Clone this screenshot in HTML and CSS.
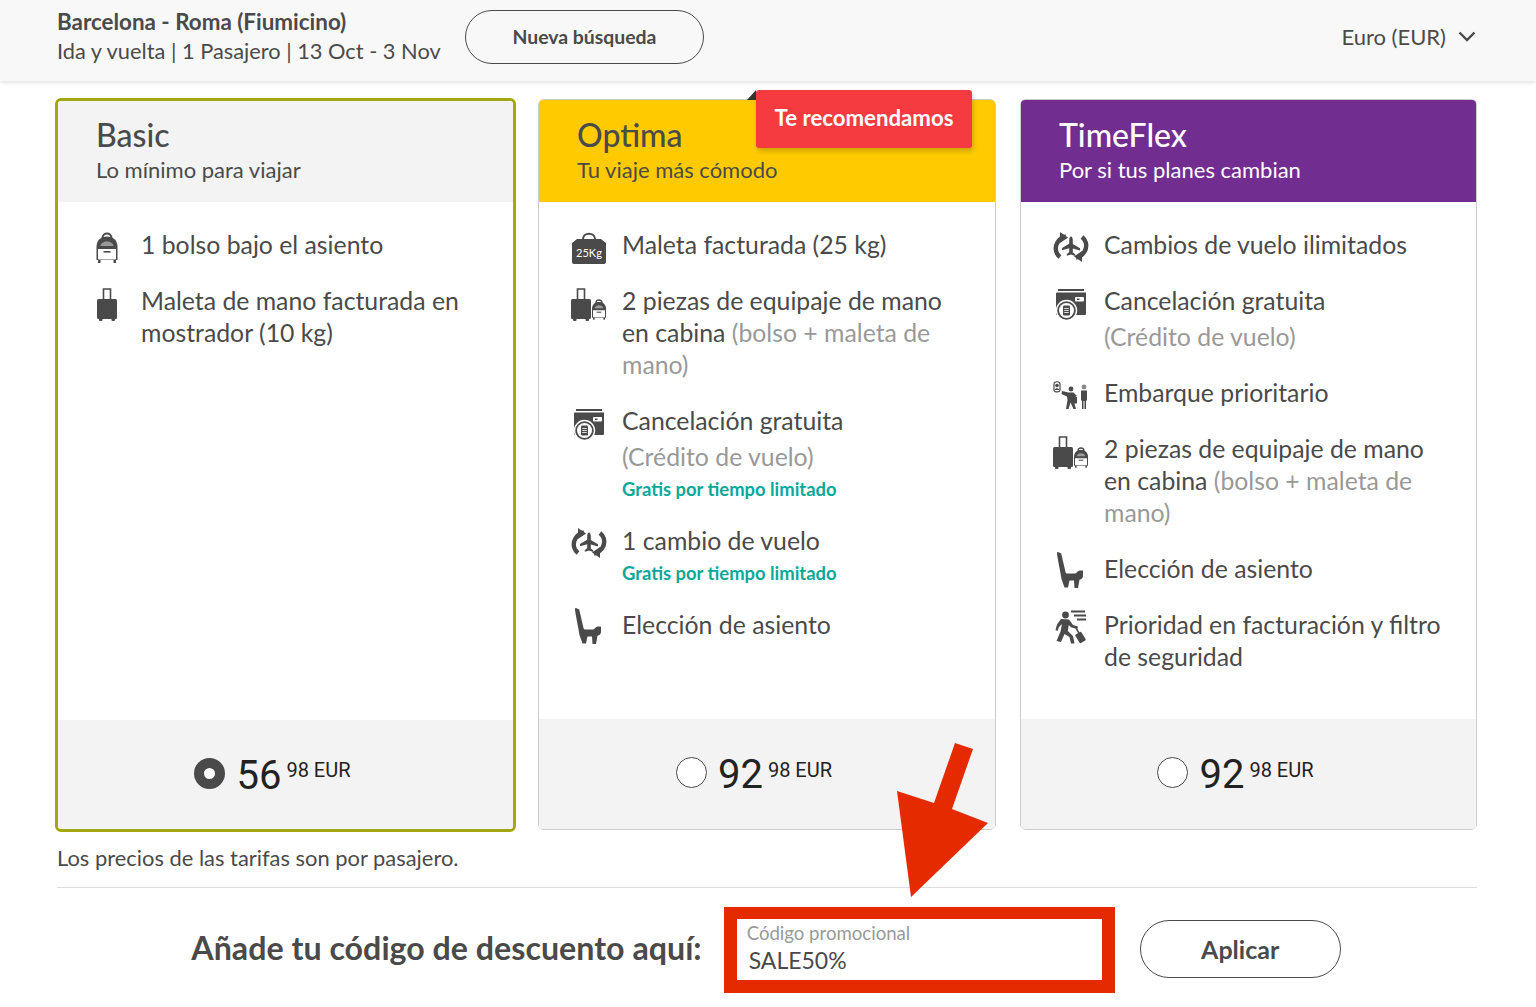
FILE: index.html
```html
<!DOCTYPE html>
<html lang="es">
<head>
    <meta charset="UTF-8">
    <meta name="viewport" content="width=device-width, initial-scale=1.0">
    <title>Tarifas</title>
    <link rel="stylesheet" href="styles.css">
</head>
<body>
    <!-- icon set -->
    <svg class="icon-defs" aria-hidden="true">
        <symbol id="i-backpack" viewBox="0 0 24 32">
            <path d="M7.500 7C7.500 1 16.500 1 16.500 7" fill="none" stroke="#4a4a4a" stroke-width="2"/>
            <path d="M1.500 29V16C1.500 9 6 5.500 12 5.500S22.500 9 22.500 16v13z" fill="#4a4a4a"/>
            <path d="M5.500 15c.5-6 12.500-6 13 0z" fill="#9a9a9a"/>
            <path d="M3 18h18v9.500a1 1 0 0 1-1 1H4a1 1 0 0 1-1-1z" fill="#fff"/>
            <rect x="8.500" y="20" width="7" height="1.600" fill="#4a4a4a"/>
            <rect x="3" y="29" width="2.500" height="3" fill="#4a4a4a"/>
            <rect x="18.500" y="29" width="2.500" height="3" fill="#4a4a4a"/>
        </symbol>
        <symbol id="i-trolley" viewBox="0 0 20 34">
            <path d="M6.500 12V2h7v10" fill="none" stroke="#4a4a4a" stroke-width="1.600"/>
            <rect y="12" width="20" height="20" rx="1.500" fill="#4a4a4a"/>
            <rect x="2" y="31" width="3.500" height="3" rx="1" fill="#4a4a4a"/>
            <rect x="14.500" y="31" width="3.500" height="3" rx="1" fill="#4a4a4a"/>
        </symbol>
        <symbol id="i-bags" viewBox="0 0 36 34">
            <use href="#i-trolley" x="0" y="0" width="20" height="34"/>
            <use href="#i-backpack" x="20" y="11" width="16" height="22"/>
        </symbol>
        <symbol id="i-wallet" viewBox="0 0 32 33">
            <path d="M3 1h26v2H3z" fill="#4a4a4a"/>
            <path d="M2 4.500h29V26a1 1 0 0 1-1 1H2a1 1 0 0 1-1-1V5.500a1 1 0 0 1 1-1z" fill="#4a4a4a"/>
            <rect x="20" y="9" width="9" height="4.500" rx="1" fill="#fff"/>
            <rect x="22" y="10.500" width="2.500" height="1.500" fill="#4a4a4a"/>
            <circle cx="11.500" cy="22.500" r="10" fill="#4a4a4a" stroke="#fff" stroke-width="1.400"/>
            <circle cx="11.500" cy="22.500" r="7.500" fill="#fff"/>
            <rect x="8" y="17.500" width="7" height="10" rx="1.200" fill="#4a4a4a"/>
            <path d="M9.200 20.500h4.600M9.200 22.500h4.600M9.200 24.500h4.600" stroke="#fff" stroke-width=".8"/>
        </symbol>
        <symbol id="i-swap" viewBox="0 0 36 30">
            <path d="M13 4.500C5.500 6 1.500 13 3.200 19.500c.6 2.200 1.800 4 3.800 5.500" fill="none" stroke="#4a4a4a" stroke-width="4.400"/>
            <path d="M23 25.500c7.500-1.500 11.500-8.500 9.800-15-.6-2.200-1.800-4-3.800-5.500" fill="none" stroke="#4a4a4a" stroke-width="4.400"/>
            <path d="M7 0l8 5.500L7 11z" fill="#4a4a4a"/>
            <path d="M29 30l-8-5.500L29 19z" fill="#4a4a4a"/>
            <path d="M18 4.500c1.200 0 1.800 1.800 1.800 4v3.500l7.200 4.200v2.300l-7.200-2v4l2.400 1.800v1.700L18 22.500l-4.200 1.300v-1.700l2.400-1.800v-4l-7.200 2v-2.300l7.200-4.200V8.500c0-2.200.6-4 1.800-4z" fill="#4a4a4a"/>
        </symbol>
        <symbol id="i-seat" viewBox="0 0 26 36">
            <path d="M1 0l3.200 1.500L8.500 20c.3 1 1 1.500 2 1.500h7c1.200 0 2-.8 2.800-1.800 1-1 3-1.500 5.700-1.200v5c0 2.500-1.500 4-3.500 4.200L21 36h-3.500l-.5-7.500h-4.500L11 35.500H7.500L4.500 27C3 18 1 9 0 2c-.1-1 .2-2 1-2z" fill="#4a4a4a"/>
        </symbol>
        <symbol id="i-priority" viewBox="0 0 35 28">
            <path d="M1 3C1 0 7 0 7 3v6c0 2.500-6 2.500-6 0z" fill="#fff" stroke="#4a4a4a" stroke-width="1.200"/>
            <circle cx="4" cy="4.500" r="1.800" fill="#4a4a4a"/>
            <path d="M1.800 9c0-2.200 4.400-2.200 4.400 0z" fill="#4a4a4a"/>
            <circle cx="18" cy="8" r="2.400" fill="#4a4a4a"/>
            <path d="M9 10l6.500 1.500h5L24 15l-3 1.500v4.500l2 7h-2.500l-3-6.500-2 6.500H13l1.500-9-.5-3.500-5.500-2.500z" fill="#4a4a4a"/>
            <rect x="19" y="16" width="5" height="6.500" fill="#4a4a4a"/>
            <circle cx="31" cy="6" r="2.400" fill="#8a8a8a"/>
            <path d="M28 9.500h6v10h-1v8.500h-1.500v-8h-1v8H29v-8.500h-1z" fill="#4a4a4a"/>
        </symbol>
        <symbol id="i-runner" viewBox="0 0 32 34">
            <circle cx="10.500" cy="5" r="3.400" fill="#4a4a4a"/>
            <path d="M16 1.500h14M19 5.500h12M22 9.500h9" stroke="#4a4a4a" stroke-width="2"/>
            <path d="M6 9l8 .5 4 5.500 5 1.500-.8 2.500-6.200-1.800-2.200-2.200-1 6 5.200 5 1.500 7.500h-3.500L14.500 27l-5-3-3.500 8L1.500 31l4-9.500 1.500-7.500-3 3-1.500 4L.5 20 2 14.500z" fill="#4a4a4a"/>
            <path d="M21 18l3.500 6" stroke="#4a4a4a" stroke-width="1.500"/>
            <rect x="22" y="22.500" width="7" height="10" rx="1" transform="rotate(-32 25.500 27.500)" fill="#4a4a4a"/>
        </symbol>
    </svg>

    <header class="topbar">
        <div class="trip">
            <div class="trip-route">Barcelona - Roma (Fiumicino)</div>
            <div class="trip-info">Ida y vuelta | 1 Pasajero | 13 Oct - 3 Nov</div>
        </div>
        <button class="btn btn-search">Nueva búsqueda</button>
        <div class="currency">
            <span>Euro (EUR)</span>
            <svg class="chevron" viewBox="0 0 18 11"><path d="M1.500 1.500L9 9l7.500-7.500" fill="none" stroke="#4a4a4a" stroke-width="2.400"/></svg>
        </div>
    </header>

    <main class="content">
        <section class="fares">
            <article class="fare fare-selected">
                <div class="fare-head">
                    <h2>Basic</h2>
                    <p>Lo mínimo para viajar</p>
                </div>
                <ul class="features">
                    <li><span class="slot"><svg class="ico-backpack"><use href="#i-backpack"/></svg></span><div>1 bolso bajo el asiento</div></li>
                    <li><span class="slot"><svg class="ico-trolley"><use href="#i-trolley"/></svg></span><div>Maleta de mano facturada en mostrador (10 kg)</div></li>
                </ul>
                <div class="fare-foot">
                    <span class="radio radio-on"></span>
                    <span class="price">56</span><span class="cents">98 EUR</span>
                </div>
            </article>

            <article class="fare fare-optima">
                <div class="badge">Te recomendamos</div>
                <div class="fare-head">
                    <h2>Optima</h2>
                    <p>Tu viaje más cómodo</p>
                </div>
                <ul class="features">
                    <li>
                        <span class="slot">
                            <svg class="ico-bag" viewBox="0 0 34 33">
                                <path d="M11 8C11 1 23 1 23 8" fill="none" stroke="#4a4a4a" stroke-width="2"/>
                                <path d="M5 8h24l5 4v19a2 2 0 0 1-2 2H2a2 2 0 0 1-2-2V12z" fill="#4a4a4a"/>
                                <text x="17" y="26" text-anchor="middle" class="bag-text">25Kg</text>
                            </svg>
                        </span>
                        <div>Maleta facturada (25 kg)</div>
                    </li>
                    <li><span class="slot"><svg class="ico-bags"><use href="#i-bags"/></svg></span><div>2 piezas de equipaje de mano en cabina <span class="muted">(bolso + maleta de mano)</span></div></li>
                    <li>
                        <span class="slot"><svg class="ico-wallet"><use href="#i-wallet"/></svg></span>
                        <div>Cancelación gratuita<div class="muted sub">(Crédito de vuelo)</div><div class="promo">Gratis por tiempo limitado</div></div>
                    </li>
                    <li>
                        <span class="slot"><svg class="ico-swap"><use href="#i-swap"/></svg></span>
                        <div>1 cambio de vuelo<div class="promo">Gratis por tiempo limitado</div></div>
                    </li>
                    <li><span class="slot"><svg class="ico-seat"><use href="#i-seat"/></svg></span><div>Elección de asiento</div></li>
                </ul>
                <div class="fare-foot">
                    <span class="radio"></span>
                    <span class="price">92</span><span class="cents">98 EUR</span>
                </div>
            </article>

            <article class="fare fare-flex">
                <div class="fare-head">
                    <h2>TimeFlex</h2>
                    <p>Por si tus planes cambian</p>
                </div>
                <ul class="features">
                    <li><span class="slot"><svg class="ico-swap"><use href="#i-swap"/></svg></span><div>Cambios de vuelo ilimitados</div></li>
                    <li>
                        <span class="slot"><svg class="ico-wallet"><use href="#i-wallet"/></svg></span>
                        <div>Cancelación gratuita<div class="muted sub">(Crédito de vuelo)</div></div>
                    </li>
                    <li><span class="slot"><svg class="ico-priority"><use href="#i-priority"/></svg></span><div>Embarque prioritario</div></li>
                    <li><span class="slot"><svg class="ico-bags"><use href="#i-bags"/></svg></span><div>2 piezas de equipaje de mano en cabina <span class="muted">(bolso + maleta de mano)</span></div></li>
                    <li><span class="slot"><svg class="ico-seat"><use href="#i-seat"/></svg></span><div>Elección de asiento</div></li>
                    <li><span class="slot"><svg class="ico-runner"><use href="#i-runner"/></svg></span><div>Prioridad en facturación y filtro de seguridad</div></li>
                </ul>
                <div class="fare-foot">
                    <span class="radio"></span>
                    <span class="price">92</span><span class="cents">98 EUR</span>
                </div>
            </article>
        </section>

        <p class="note">Los precios de las tarifas son por pasajero.</p>

        <form class="promo-row">
            <span class="promo-title">Añade tu código de descuento aquí:</span>
            <div class="promo-box">
                <div class="promo-label">Código promocional</div>
                <div class="promo-value">SALE50%</div>
            </div>
            <button type="button" class="btn btn-apply">Aplicar</button>
        </form>
    </main>

    <!-- red annotation arrow -->
    <svg class="arrow" viewBox="0 0 1536 1007">
        <polygon points="955,743 973,749 952,809 988,823 911,897 897,791 934,803" fill="#e52a00"/>
    </svg>
</body>
</html>
```

FILE: styles.css
```css
html, body {
    margin: 0;
    padding: 0;
}

body {
    position: relative;
    height: 1007px;
    overflow: hidden;
    background: #fff;
    color: #4a4a4a;
    font-family: 'Lato', sans-serif;
}

.icon-defs {
    position: absolute;
    width: 0;
    height: 0;
}

.topbar {
    display: flex;
    align-items: center;
    box-sizing: border-box;
    height: 81px;
    padding: 0 60px 9px 57px;
    background: #f8f8f8;
    box-shadow: 0 2px 4px rgba(0, 0, 0, 0.1);
}

.trip {
    width: 383px;
    line-height: 29px;
    white-space: nowrap;
}

.trip-route {
    font-size: 22.4px;
    font-weight: 700;
}

.trip-info {
    font-size: 21.8px;
}

.btn {
    background: #fff;
    border: 1.5px solid #4a4a4a;
    color: #4a4a4a;
    font-family: inherit;
    font-weight: 700;
    cursor: pointer;
}

.btn-search {
    width: 239px;
    height: 54px;
    margin: 2px 0 0 25px;
    padding-bottom: 3px;
    border-radius: 27px;
    background: #f8f8f8;
    font-size: 19.4px;
}

.currency {
    display: flex;
    align-items: center;
    gap: 12px;
    margin-left: auto;
    font-size: 22px;
}

.chevron {
    width: 18px;
    height: 11px;
}

.content {
    padding: 17px 59px 0 55px;
}

.fares {
    display: grid;
    grid-template-columns: 483px 482px 457px;
    height: 734px;
}

.fare {
    position: relative;
    display: flex;
    flex-direction: column;
    margin: 1px 0 2px;
    border: 1px solid #ccc;
    border-radius: 6px;
}

.fare-selected {
    margin: 0 22px 0 0;
    border: 3px solid #a3a812;
}

.fare-optima {
    margin-right: 24px;
}

.fare-head {
    height: 102px;
    box-sizing: border-box;
    padding: 15px 38px 0;
    border-radius: 4px 4px 0 0;
    background: #f3f3f3;
}

.fare-selected .fare-head {
    height: 101px;
    padding-top: 14px;
}

.fare-optima .fare-head {
    background: #ffcb00;
}

.fare-flex .fare-head {
    background: #722d91;
    color: #fff;
}

.fare-head h2 {
    margin: 0;
    font-size: 32px;
    font-weight: 500;
    line-height: 39px;
}

.fare-head p {
    margin: 1px 0 0;
    font-size: 22px;
    line-height: 30px;
}

.badge {
    position: absolute;
    top: -10px;
    left: 217px;
    width: 216px;
    height: 58px;
    border-radius: 3px;
    background: #f53b3f;
    box-shadow: 1px 3px 5px rgba(0, 0, 0, 0.2);
    color: #fff;
    font-size: 22.2px;
    font-weight: 700;
    line-height: 56px;
    text-align: center;
}

.badge::before {
    content: '';
    position: absolute;
    top: 0;
    left: -9px;
    border-bottom: 10px solid #333;
    border-left: 9px solid transparent;
}

.features {
    flex: 1;
    margin: 0;
    padding: 27px 30px 0 32px;
    list-style: none;
    font-size: 24.8px;
    line-height: 32px;
}

.fare-selected .features {
    padding-left: 36px;
}

.features li {
    display: flex;
    gap: 15px;
    margin-bottom: 24px;
}

.slot {
    flex: none;
    display: flex;
    align-items: flex-start;
    width: 36px;
    height: 32px;
}

.fare-selected .slot {
    width: 32px;
}

.slot svg {
    display: block;
    flex: none;
}

.ico-backpack { width: 24px; height: 32px; margin: 2px 0 0 1px; }
.ico-trolley { width: 20px; height: 34px; margin: 2px 0 0 3px; }
.ico-bag { width: 34px; height: 33px; margin: 2px 0 0 1px; }
.ico-bags { width: 36px; height: 34px; margin-top: 2px; }
.ico-wallet { width: 32px; height: 33px; margin: 3px 0 0 2px; }
.ico-swap { width: 36px; height: 30px; margin-top: 3px; }
.ico-seat { width: 26px; height: 36px; margin: -1px 0 0 4px; }
.ico-priority { width: 35px; height: 28px; margin-top: 4px; }
.ico-runner { width: 32px; height: 34px; margin: 1px 0 0 2px; }

.bag-text {
    fill: #fff;
    font-size: 11px;
}

.muted {
    color: #999;
}

.sub {
    margin-top: 4px;
}

.promo {
    margin-top: 4px;
    color: #0ba89a;
    font-size: 18.4px;
    font-weight: 700;
    line-height: 24px;
}

.fare-foot {
    display: flex;
    justify-content: center;
    align-items: center;
    height: 110px;
    box-sizing: border-box;
    padding: 0 26px 3px 0;
    border-radius: 0 0 4px 4px;
    background: #f3f3f3;
}

.fare-selected .fare-foot {
    height: 109px;
}

.radio {
    box-sizing: border-box;
    width: 31px;
    height: 31px;
    margin-right: 11px;
    border: 1px solid #4a4a4a;
    border-radius: 50%;
    background: #fff;
}

.radio-on {
    border: 10px solid #4a4a4a;
}

.price {
    margin-top: 5px;
    color: #222;
    font-family: 'Roboto', sans-serif;
    font-size: 40px;
    line-height: 44px;
}

.cents {
    margin: -6px 0 0 5px;
    color: #222;
    font-family: 'Roboto', sans-serif;
    font-size: 20px;
}

.note {
    margin: 11px 0 0 2px;
    padding-bottom: 14px;
    border-bottom: 1px solid #ddd;
    font-size: 21.9px;
    line-height: 30px;
}

.promo-row {
    display: flex;
    justify-content: center;
    align-items: center;
    margin-top: 19px;
}

.promo-title {
    margin: 0 22px 6px 0;
    font-size: 32.2px;
    font-weight: 700;
    white-space: nowrap;
}

.promo-box {
    box-sizing: border-box;
    width: 391px;
    height: 86px;
    padding: 2px 10px 0 10px;
    border: solid #e52a00;
    border-width: 12px 13px 13px;
}

.promo-label {
    color: #999;
    font-size: 18.6px;
    line-height: 25px;
}

.promo-value {
    margin: 0 0 0 2px;
    font-size: 23px;
    line-height: 28px;
}

.btn-apply {
    width: 201px;
    height: 58px;
    margin: 0 0 2px 25px;
    border-radius: 29px;
    font-size: 25px;
}

.arrow {
    position: absolute;
    top: 0;
    left: 0;
    width: 1536px;
    height: 1007px;
    pointer-events: none;
}
```
